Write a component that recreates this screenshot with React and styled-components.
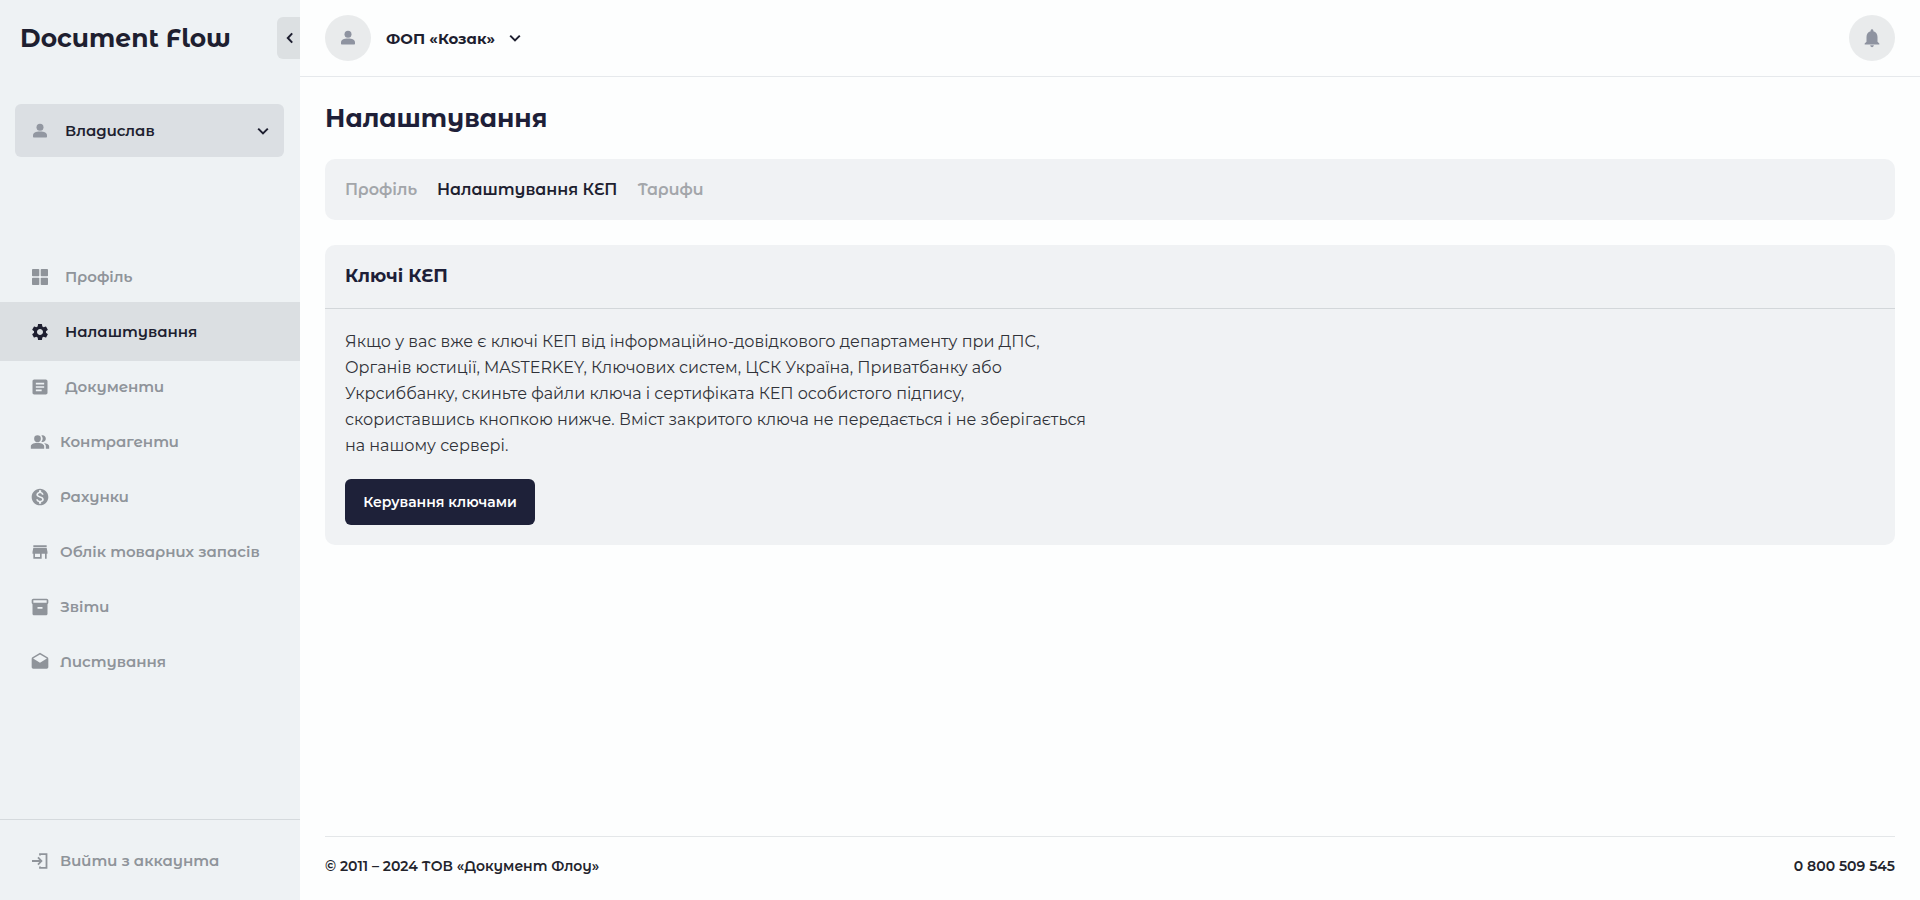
import React, { useState } from 'react';
import styled, { createGlobalStyle } from 'styled-components';
import {
  MdArticle,
  MdDrafts,
  MdInventory2,
  MdMonetizationOn,
  MdNotifications,
  MdPeopleAlt,
  MdSettings,
  MdStore,
} from 'react-icons/md';

const GlobalStyle = createGlobalStyle`
  * {
    box-sizing: border-box;
  }
  body {
    margin: 0;
    background: #fdfefe;
    color: #1e1f38;
    font-family: 'Montserrat Alternates', Montserrat, Inter, sans-serif;
    font-size: 16px;
  }
  button, select {
    font: inherit;
    color: inherit;
    border: none;
    background: none;
    padding: 0;
    cursor: pointer;
  }
  h1, h2, p, ul {
    margin: 0;
    padding: 0;
  }
`;

const Layout = styled.div`
  display: flex;
  min-height: 100vh;
`;

const Sidebar = styled.aside`
  display: flex;
  flex-direction: column;
  width: 300px;
  flex-shrink: 0;
  background: #eef2f4;
`;

const SidebarTop = styled.div`
  display: flex;
  align-items: center;
  justify-content: space-between;
  height: 76px;
  padding-left: 20px;
`;

const Logo = styled.a`
  font-size: 25px;
  font-weight: 700;
  color: #1e1f30;
  text-decoration: none;
`;

const CollapseButton = styled.button`
  display: flex;
  align-items: center;
  justify-content: center;
  width: 23px;
  height: 42px;
  border-radius: 6px 0 0 6px;
  background: #dce0e2;
`;

const UserBox = styled.div`
  display: flex;
  align-items: center;
  height: 53px;
  margin: 28px 16px 0 15px;
  padding-left: 15px;
  border-radius: 6px;
  background: #dbdfe3;
  color: #9297a1;
`;

const SelectWrap = styled.label`
  display: grid;
  flex: ${({ $grow }) => ($grow ? 1 : 'none')};
  align-items: center;
  color: #1e1f30;

  > * {
    grid-area: 1 / 1;
  }
  > svg {
    justify-self: end;
    margin-right: ${({ $grow }) => ($grow ? '15px' : '0')};
    pointer-events: none;
  }
`;

const Select = styled.select`
  appearance: none;
  width: 100%;
  height: 46px;
  padding-left: 15px;
  padding-right: 25px;
  font-size: 15px;
  font-weight: ${({ $weight }) => $weight};
`;

const NavList = styled.ul`
  flex: 1;
  margin-top: 90px;
  list-style: none;
`;

const NavLink = styled.a`
  display: flex;
  align-items: center;
  gap: ${({ $wide }) => ($wide ? '15px' : '10px')};
  height: 59px;
  margin-bottom: -4px;
  padding-left: 30px;
  font-size: 15px;
  font-weight: 600;
  text-decoration: none;
  color: ${({ $active }) => ($active ? '#1e1f30' : '#8f949a')};
  background: ${({ $active }) => ($active ? '#dbdfe2' : 'transparent')};
`;

const SidebarBottom = styled.div`
  padding: 11px 0 14px;
  border-top: 1px solid #d5dadd;
`;

const Content = styled.div`
  display: flex;
  flex-direction: column;
  flex: 1;
  min-width: 0;
`;

const Header = styled.header`
  display: flex;
  align-items: center;
  justify-content: space-between;
  height: 77px;
  padding: 0 25px;
  border-bottom: 1px solid #e6e9ec;
`;

const Company = styled.div`
  display: flex;
  align-items: center;
`;

const Circle = styled.span`
  display: flex;
  align-items: center;
  justify-content: center;
  width: 46px;
  height: 46px;
  border-radius: 50%;
  background: #e9ebec;
  color: #8e93a0;
`;

const Main = styled.main`
  flex: 1;
  padding: 25px;
`;

const Title = styled.h1`
  font-size: 25px;
  line-height: 32px;
  font-weight: 700;
`;

const Card = styled.section`
  margin-top: 25px;
  border-radius: 10px;
  background: #f0f2f4;
`;

const Tabs = styled(Card)`
  display: flex;
  align-items: center;
  gap: 20px;
  height: 61px;
  padding: 0 20px;
`;

const Tab = styled.button`
  font-size: 16px;
  font-weight: 600;
  color: ${({ $active }) => ($active ? '#1e1f30' : '#a3a6aa')};
`;

const CardTitle = styled.h2`
  padding: 0 20px;
  border-bottom: 1px solid #d3d7da;
  font-size: 18px;
  line-height: 63px;
  font-weight: 700;
`;

const CardBody = styled.div`
  padding: 20px;
  font-family: Montserrat, Inter, sans-serif;
`;

const Text = styled.p`
  font-size: 16px;
  line-height: 26px;
  color: #303239;
`;

const PrimaryButton = styled.button`
  height: 46px;
  min-width: 190px;
  margin-top: 20px;
  border-radius: 6px;
  background: #1e2139;
  color: #fff;
  font-size: 14px;
  font-weight: 600;
`;

const Footer = styled.footer`
  display: flex;
  align-items: center;
  justify-content: space-between;
  height: 64px;
  margin: 0 25px;
  padding-bottom: 6px;
  border-top: 1px solid #e4e7e9;
  font-size: 14px;
  font-weight: 600;
  color: #23242c;
`;

const Phone = styled.a`
  color: inherit;
  text-decoration: none;
`;

const GridIcon = () => (
  <svg width="20" height="20" viewBox="0 0 20 20" fill="currentColor" aria-hidden="true">
    <rect x="2" y="2" width="7.3" height="7.3" rx="0.8" />
    <rect x="10.7" y="2" width="7.3" height="7.3" rx="0.8" />
    <rect x="2" y="10.7" width="7.3" height="7.3" rx="0.8" />
    <rect x="10.7" y="10.7" width="7.3" height="7.3" rx="0.8" />
  </svg>
);

const PersonIcon = () => (
  <svg width="20" height="20" viewBox="0 0 20 20" fill="currentColor" aria-hidden="true">
    <circle cx="10" cy="6.2" r="3.5" />
    <path d="M3 14.6c0-2.8 2.6-4.1 7-4.1s7 1.3 7 4.1v.8c0 .6-.4 1-1 1H4c-.6 0-1-.4-1-1z" />
  </svg>
);

const ExitIcon = () => (
  <svg
    width="20"
    height="20"
    viewBox="0 0 20 20"
    fill="none"
    stroke="currentColor"
    strokeWidth="1.8"
    aria-hidden="true"
  >
    <path d="M10 4.6V3.1h6.5v13.8H10v-1.5M2 10h9M8 6.4l3.4 3.6L8 13.6" />
  </svg>
);

const Chevron = ({ left }) => (
  <svg
    width="12"
    height="12"
    viewBox="0 0 12 12"
    fill="none"
    stroke="#1e1f30"
    strokeWidth="2"
    aria-hidden="true"
  >
    <path d={left ? 'M9.2 1.4L4.8 6l4.4 4.6' : 'M1.2 3.6L6 8.4l4.8-4.8'} />
  </svg>
);

const navItems = [
  { label: 'Профіль', icon: <GridIcon />, wide: true },
  { label: 'Налаштування', icon: <MdSettings size={20} />, wide: true },
  { label: 'Документи', icon: <MdArticle size={20} />, wide: true },
  { label: 'Контрагенти', icon: <MdPeopleAlt size={20} /> },
  { label: 'Рахунки', icon: <MdMonetizationOn size={20} /> },
  { label: 'Облік товарних запасів', icon: <MdStore size={20} /> },
  { label: 'Звіти', icon: <MdInventory2 size={20} /> },
  { label: 'Листування', icon: <MdDrafts size={20} /> },
];

const tabs = ['Профіль', 'Налаштування КЕП', 'Тарифи'];

const App = () => {
  const [page, setPage] = useState('Налаштування');
  const [tab, setTab] = useState('Налаштування КЕП');

  return (
    <>
      <GlobalStyle />
      <Layout lang="uk">
        <Sidebar>
          <SidebarTop>
            <Logo href="#">Document Flow</Logo>
            <CollapseButton type="button" aria-label="Згорнути меню">
              <Chevron left />
            </CollapseButton>
          </SidebarTop>
          <UserBox>
            <PersonIcon />
            <SelectWrap $grow>
              <Select $weight={600} aria-label="Користувач">
                <option>Владислав</option>
              </Select>
              <Chevron />
            </SelectWrap>
          </UserBox>
          <NavList>
            {navItems.map(({ label, icon, wide }) => (
              <li key={label}>
                <NavLink
                  href="#"
                  $wide={wide}
                  $active={label === page}
                  onClick={() => setPage(label)}
                >
                  {icon}
                  {label}
                </NavLink>
              </li>
            ))}
          </NavList>
          <SidebarBottom>
            <NavLink href="#">
              <ExitIcon />
              Вийти з аккаунта
            </NavLink>
          </SidebarBottom>
        </Sidebar>
        <Content>
          <Header>
            <Company>
              <Circle>
                <PersonIcon />
              </Circle>
              <SelectWrap>
                <Select $weight={700} aria-label="Компанія">
                  <option>ФОП «Козак»</option>
                </Select>
                <Chevron />
              </SelectWrap>
            </Company>
            <Circle as="button" type="button" aria-label="Сповіщення">
              <MdNotifications size={22} />
            </Circle>
          </Header>
          <Main>
            <Title>Налаштування</Title>
            <Tabs as="nav">
              {tabs.map((name) => (
                <Tab key={name} type="button" $active={name === tab} onClick={() => setTab(name)}>
                  {name}
                </Tab>
              ))}
            </Tabs>
            <Card>
              <CardTitle>Ключі КЕП</CardTitle>
              <CardBody>
                <Text>
                  Якщо у вас вже є ключі КЕП від інформаційно-довідкового департаменту при ДПС,
                  <br />
                  Органів юстиції, MASTERKEY, Ключових систем, ЦСК Україна, Приватбанку або
                  <br />
                  Укрсиббанку, скиньте файли ключа і сертифіката КЕП особистого підпису,
                  <br />
                  скориставшись кнопкою нижче. Вміст закритого ключа не передається і не зберігається
                  <br />
                  на нашому сервері.
                </Text>
                <PrimaryButton type="button">Керування ключами</PrimaryButton>
              </CardBody>
            </Card>
          </Main>
          <Footer>
            <span>© 2011 – 2024 ТОВ «Документ Флоу»</span>
            <Phone href="tel:0800509545">0 800 509 545</Phone>
          </Footer>
        </Content>
      </Layout>
    </>
  );
};

export default App;
